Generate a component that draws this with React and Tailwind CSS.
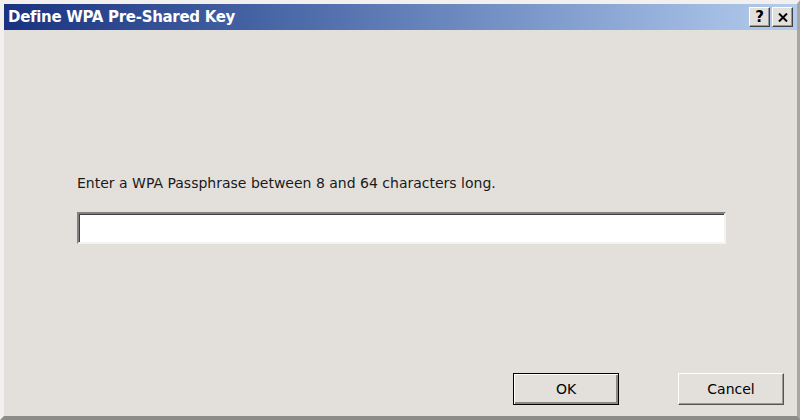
import React from "react";

const face = "bg-[#e3e0dc]";

const CaptionButton = ({ children }) => {
  return (
    <div className="w-[21px] h-[20px] bg-[#e3e0dc] border border-t-white border-l-white border-r-[#404040] border-b-[#404040] flex items-center justify-center text-black text-[15px] font-bold leading-none shadow-[inset_-1px_-1px_0_#9a9894]">
      {children}
    </div>
  );
};

const DialogButton = ({ label, isDefault }) => {
  return (
    <button
      className={`h-[32px] w-[106px] ${face} text-[14px] text-black flex items-center justify-center ${
        isDefault
          ? "border border-black shadow-[inset_1px_1px_0_#ffffff,inset_-2px_-2px_0_#8a8884]"
          : "border border-t-white border-l-white border-r-[#555] border-b-[#555] shadow-[inset_-1px_-1px_0_#9a9894]"
      }`}
    >
      {label}
    </button>
  );
};

export default function App() {
  return (
    <div
      className={`w-[800px] h-[420px] ${face} flex flex-col border-t-4 border-l-4 border-t-[#f1f0ee] border-l-[#f1f0ee] border-r-[3px] border-r-[#a8a6a2] border-b-4 border-b-[#8e8c89]`}
      style={{ fontFamily: '"DejaVu Sans", sans-serif' }}
    >
      <div className="h-[26px] bg-gradient-to-r from-[#1a3280] to-[#b4cdee] flex items-center justify-between pl-[4px] pr-[4px]">
        <span className="text-white font-bold text-[15px] tracking-[-0.3px]">
          Define WPA Pre-Shared Key
        </span>
        <div className="flex gap-[2px]">
          <CaptionButton>?</CaptionButton>
          <CaptionButton>
            <svg width="10" height="9" viewBox="0 0 10 9">
              <path d="M1 0.5 L9 8.5 M9 0.5 L1 8.5" stroke="black" strokeWidth="2" />
            </svg>
          </CaptionButton>
        </div>
      </div>
      <div className="flex-1 flex flex-col px-[73px] pt-[146px]">
        <p className="text-[14px] text-[#1a1a1a] leading-none">
          Enter a WPA Passphrase between 8 and 64 characters long.
        </p>
        <div className="mt-[22px] h-[32px] w-[649px] bg-white border-2 border-t-[#808080] border-l-[#808080] border-r-[#f4f3f1] border-b-[#f4f3f1] shadow-[inset_1px_1px_0_#404040]" />
      </div>
      <div className="flex justify-end gap-[59px] pr-[13px] pb-[11px]">
        <DialogButton label="OK" isDefault />
        <DialogButton label="Cancel" />
      </div>
    </div>
  );
}
